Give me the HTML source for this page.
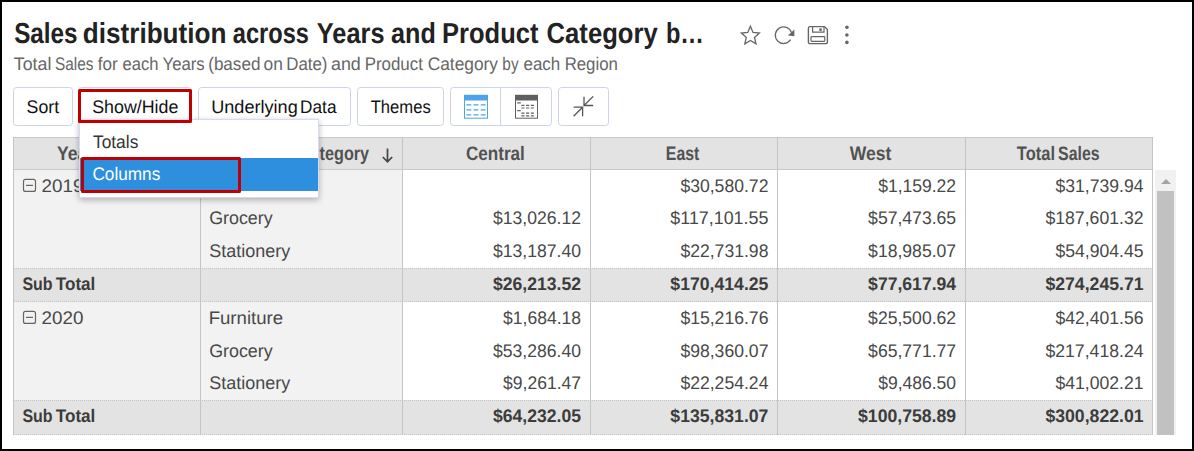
<!DOCTYPE html>
<html lang="en"><head><meta charset="utf-8"><title>Sales distribution across Years and Product Category by Region</title><style>
html,body{margin:0;padding:0;}
body{width:1194px;height:451px;position:relative;overflow:hidden;background:#fff;font-family:"Liberation Sans", sans-serif;}
.t{position:absolute;left:0;white-space:nowrap;text-rendering:geometricPrecision;transform-origin:0 50%;}
.abs{position:absolute;box-sizing:border-box;}
.btn{position:absolute;box-sizing:border-box;border:1px solid #ccd3ea;border-radius:3.5px;background:#fff;top:87px;height:39px;}
.hl{position:absolute;box-sizing:border-box;border:3px solid #c00000;border-radius:1.5px;}
.frame{position:absolute;box-sizing:border-box;left:0;top:0;width:1194px;height:451px;border:2px solid #000;pointer-events:none;}
</style></head><body>
<h1 class="title" style="margin:0;font-size:inherit;font-weight:inherit;">
<span class="t" style="top:17px;font-size:28.9px;line-height:34px;font-weight:700;color:#222;transform:translateX(14.13px) scaleX(0.8411);">Sales </span>
<span class="t" style="top:17px;font-size:28.9px;line-height:34px;font-weight:700;color:#222;transform:translateX(82.82px) scaleX(0.9039);">distribution </span>
<span class="t" style="top:17px;font-size:28.9px;line-height:34px;font-weight:700;color:#222;transform:translateX(232.85px) scaleX(0.8175);">across </span>
<span class="t" style="top:17px;font-size:28.9px;line-height:34px;font-weight:700;color:#222;transform:translateX(316.87px) scaleX(0.8765);">Years </span>
<span class="t" style="top:17px;font-size:28.9px;line-height:34px;font-weight:700;color:#222;transform:translateX(391.08px) scaleX(0.8703);">and </span>
<span class="t" style="top:17px;font-size:28.9px;line-height:34px;font-weight:700;color:#222;transform:translateX(442.08px) scaleX(0.8822);">Product </span>
<span class="t" style="top:17px;font-size:28.9px;line-height:34px;font-weight:700;color:#222;transform:translateX(546.58px) scaleX(0.8872);">Category </span>
<span class="t" style="top:17px;font-size:28.9px;line-height:34px;font-weight:700;color:#222;transform:translateX(665.88px) scaleX(0.8165);">b… </span>
</h1>
<p class="subtitle" style="margin:0;">
<span class="t" style="top:53px;font-size:18.2px;line-height:22px;color:#666;transform:translateX(13.78px) scaleX(0.9773);">Total </span>
<span class="t" style="top:53px;font-size:18.2px;line-height:22px;color:#666;transform:translateX(55.01px) scaleX(0.8451);">Sales </span>
<span class="t" style="top:53px;font-size:18.2px;line-height:22px;color:#666;transform:translateX(97.67px) scaleX(0.9393);">for </span>
<span class="t" style="top:53px;font-size:18.2px;line-height:22px;color:#666;transform:translateX(122.54px) scaleX(0.9120);">each </span>
<span class="t" style="top:53px;font-size:18.2px;line-height:22px;color:#666;transform:translateX(162.49px) scaleX(0.9220);">Years </span>
<span class="t" style="top:53px;font-size:18.2px;line-height:22px;color:#666;transform:translateX(208.20px) scaleX(0.9381);">(based </span>
<span class="t" style="top:53px;font-size:18.2px;line-height:22px;color:#666;transform:translateX(263.55px) scaleX(0.9544);">on </span>
<span class="t" style="top:53px;font-size:18.2px;line-height:22px;color:#666;transform:translateX(286.19px) scaleX(0.9283);">Date) </span>
<span class="t" style="top:53px;font-size:18.2px;line-height:22px;color:#666;transform:translateX(330.95px) scaleX(0.9837);">and </span>
<span class="t" style="top:53px;font-size:18.2px;line-height:22px;color:#666;transform:translateX(364.64px) scaleX(0.9298);">Product </span>
<span class="t" style="top:53px;font-size:18.2px;line-height:22px;color:#666;transform:translateX(427.68px) scaleX(0.9532);">Category </span>
<span class="t" style="top:53px;font-size:18.2px;line-height:22px;color:#666;transform:translateX(502.34px) scaleX(0.8444);">by </span>
<span class="t" style="top:53px;font-size:18.2px;line-height:22px;color:#666;transform:translateX(523.51px) scaleX(0.9320);">each </span>
<span class="t" style="top:53px;font-size:18.2px;line-height:22px;color:#666;transform:translateX(564.65px) scaleX(0.9235);">Region </span>
</p>
<div class="toolbar">
<div class="btn" style="left:13px;width:60px;"></div>
<div class="btn" style="left:78px;width:114px;"></div>
<div class="btn" style="left:198px;width:153px;"></div>
<div class="btn" style="left:357px;width:87px;"></div>
<div class="btn" style="left:450px;width:102px;"></div>
<div class="abs" style="left:500px;top:87px;width:1px;height:39px;background:#ccd3ea;"></div>
<div class="btn" style="left:558px;width:51px;"></div>
<span class="t" style="top:96px;font-size:18.2px;line-height:22px;color:#111;transform:translateX(26.62px) scaleX(0.9745);">Sort </span>
<span class="t" style="top:96px;font-size:18.2px;line-height:22px;color:#111;transform:translateX(92.14px) scaleX(0.9809);">Show/Hide </span>
<span class="t" style="top:96px;font-size:18.2px;line-height:22px;color:#111;transform:translateX(211.22px) scaleX(0.9953);">Underlying </span>
<span class="t" style="top:96px;font-size:18.2px;line-height:22px;color:#111;transform:translateX(300.12px) scaleX(0.9462);">Data </span>
<span class="t" style="top:96px;font-size:18.2px;line-height:22px;color:#111;transform:translateX(370.71px) scaleX(0.9130);">Themes </span>
<svg class="abs" style="left:0;top:0;" width="1194" height="451" viewBox="0 0 1194 451" fill="none">
<!-- star -->
<path d="M750.4 26.2 L753 32.4 L759.4 33 L754.5 37.4 L756 43.8 L750.4 40.4 L744.8 43.8 L746.3 37.4 L741.4 33 L747.8 32.4 Z" stroke="#666" stroke-width="1.3" stroke-linejoin="miter" fill="none"/>
<!-- reload -->
<path d="M791.5 32.6 A8.3 8.3 0 1 0 790.6 39.7" stroke="#666" stroke-width="1.25" fill="none"/>
<path d="M794.4 29.4 L794.4 36.2 L787.9 35.5 Z" fill="#666"/>
<!-- save -->
<path d="M810 26.6 H824.5 L827.4 29.5 V42 A1.6 1.6 0 0 1 825.8 43.6 H810 A1.6 1.6 0 0 1 808.4 42 V28.2 A1.6 1.6 0 0 1 810 26.6 Z" stroke="#666" stroke-width="1.4" fill="none"/>
<path d="M812.6 26.6 V32.2 H824 V26.6" stroke="#666" stroke-width="1.2" fill="none"/>
<rect x="819.3" y="28.4" width="2.5" height="2.5" fill="#666"/>
<rect x="811" y="36.6" width="13.8" height="4.7" rx="0.8" stroke="#666" stroke-width="1.2" fill="none"/>
<!-- dots -->
<circle cx="846.9" cy="27.3" r="1.8" fill="#666"/><circle cx="846.9" cy="35" r="1.8" fill="#666"/><circle cx="846.9" cy="42.4" r="1.8" fill="#666"/>
<g transform="translate(0,0.4)">
<!-- blue table icon -->
<rect x="464" y="94.5" width="24" height="5.6" fill="#4da3e9"/>
<rect x="464.5" y="95" width="23" height="22.8" stroke="#4da3e9" stroke-width="1" fill="none"/>
<g stroke="#4da3e9" stroke-width="1.2">
<path d="M466.4 104.4h4.9M473.5 104.4h4.9M480.7 104.4h4.9"/>
<path d="M466.4 109.4h4.9M473.5 109.4h4.9M480.7 109.4h4.9"/>
<path d="M466.4 114.4h4.9M473.5 114.4h4.9M480.7 114.4h4.9"/>
</g>
<!-- dark pivot icon -->
<rect x="515" y="94.5" width="23" height="5.6" fill="#606060"/>
<rect x="515.5" y="95" width="22" height="22.8" stroke="#606060" stroke-width="1" fill="none"/>
<g stroke="#606060" stroke-width="1.2">
<path d="M517.2 102.4h3.6M517.2 110.3h3.6"/>
<path d="M521.4 105h3.1M526 105h3.2M530.8 105h3.1"/>
<path d="M521.4 107.6h3.1M526 107.6h3.2M530.8 107.6h3.1"/>
<path d="M521.4 112.8h3.1M526 112.8h3.2M530.8 112.8h3.1"/>
<path d="M521.4 115.4h3.1M526 115.4h3.2M530.8 115.4h3.1"/>
</g>
</g>
<!-- collapse icon -->
<g stroke="#555" stroke-width="1.3" fill="none">
<path d="M593.2 96.4 L584 105.5 M584 96.8 V105.5 H593.2"/>
<path d="M573.6 116.3 L582.6 107.2 M573.6 107.2 H582.6 V116.3"/>
</g>
</svg>

</div>
<div class="pivot">
<div class="abs" style="left:13px;top:169px;width:390px;height:266px;background:#f2f2f2;"></div>
<div class="abs" style="left:13px;top:137px;width:1140px;height:33px;background:#e3e3e3;border-top:1px solid #c9c9c9;border-bottom:1px solid #c9c9c9;"></div>
<div class="abs" style="left:13px;top:268px;width:1140px;height:34px;background:#e3e3e3;border-top:1px dotted #c4c4c4;border-bottom:1px dotted #c4c4c4;"></div>
<div class="abs" style="left:13px;top:400px;width:1140px;height:35px;background:#e3e3e3;border-top:1px dotted #c4c4c4;border-bottom:1px dotted #c4c4c4;"></div>
<div class="abs" style="left:13px;top:137px;width:1px;height:298px;background:#c4c4c4;"></div>
<div class="abs" style="left:200px;top:137px;width:1px;height:298px;background:#c4c4c4;"></div>
<div class="abs" style="left:402px;top:137px;width:1px;height:298px;background:#c4c4c4;"></div>
<div class="abs" style="left:590px;top:137px;width:1px;height:298px;background:#c4c4c4;"></div>
<div class="abs" style="left:777px;top:137px;width:1px;height:298px;background:#c4c4c4;"></div>
<div class="abs" style="left:965px;top:137px;width:1px;height:298px;background:#c4c4c4;"></div>
<div class="abs" style="left:1152px;top:137px;width:1px;height:298px;background:#c4c4c4;"></div>
<div class="abs" style="left:1155px;top:170px;width:21px;height:265px;background:#f1f1f1;"></div>
<div class="abs" style="left:1157px;top:191px;width:17px;height:244px;background:#c1c1c1;"></div>
<div class="abs" style="left:1161px;top:179px;width:0;height:0;border-left:5px solid transparent;border-right:5px solid transparent;border-bottom:5px solid #a3a3a3;"></div>
<svg class="abs" style="left:0;top:0;" width="1194" height="451" viewBox="0 0 1194 451" fill="none">
<g stroke="#666" stroke-width="1.2" fill="none">
<rect x="23.5" y="179.4" width="12" height="12" rx="2"/><path d="M26 185.4H33"/>
<rect x="23.5" y="311.4" width="12" height="12" rx="2"/><path d="M26 317.4H33"/>
</g>
<path d="M387.5 148.5V161.5M382.8 157L387.5 161.8L392.2 157" stroke="#444" stroke-width="1.7" fill="none"/>
</svg>

<div class="thead">
<span class="t" style="top:142px;font-size:19.5px;line-height:24px;font-weight:700;color:#525252;transform:translateX(56.95px) scaleX(0.9028);">Years </span>
<span class="t" style="top:142px;font-size:19.5px;line-height:24px;font-weight:700;color:#525252;transform:translateX(233.52px) scaleX(0.8314);">Product </span>
<span class="t" style="top:142px;font-size:19.5px;line-height:24px;font-weight:700;color:#525252;transform:translateX(298.39px) scaleX(0.7658);">Ca</span>
<span class="t" style="top:142px;font-size:19.5px;line-height:24px;font-weight:700;color:#525252;transform:translateX(319.57px) scaleX(0.8318);">tegory </span>
<span class="t" style="top:142px;font-size:19.5px;line-height:24px;font-weight:700;color:#525252;transform:translateX(465.94px) scaleX(0.8770);">Central </span>
<span class="t" style="top:142px;font-size:19.5px;line-height:24px;font-weight:700;color:#525252;transform:translateX(665.81px) scaleX(0.8136);">East </span>
<span class="t" style="top:142px;font-size:19.5px;line-height:24px;font-weight:700;color:#525252;transform:translateX(849.82px) scaleX(0.8983);">West </span>
<span class="t" style="top:142px;font-size:19.5px;line-height:24px;font-weight:700;color:#525252;transform:translateX(1016.81px) scaleX(0.8460);">Total </span>
<span class="t" style="top:142px;font-size:19.5px;line-height:24px;font-weight:700;color:#525252;transform:translateX(1058.12px) scaleX(0.8135);">Sales </span>
</div>
<div class="row">
<span class="t" style="top:175px;font-size:18.2px;line-height:22px;color:#484848;transform:translateX(41.60px) scaleX(1.0355);">2019 </span>
<span class="t" style="top:175px;font-size:18.2px;line-height:22px;color:#484848;transform:translateX(208.64px) scaleX(1.0234);">Furniture </span>
<span class="t" style="top:175px;font-size:18.2px;line-height:22px;color:#484848;transform:translateX(680.40px) scaleX(0.9668);">$30,580.72 </span>
<span class="t" style="top:175px;font-size:18.2px;line-height:22px;color:#484848;transform:translateX(878.15px) scaleX(0.9634);">$1,159.22 </span>
<span class="t" style="top:175px;font-size:18.2px;line-height:22px;color:#484848;transform:translateX(1055.50px) scaleX(0.9668);">$31,739.94 </span>
</div>
<div class="row">
<span class="t" style="top:207px;font-size:18.2px;line-height:22px;color:#484848;transform:translateX(209.20px) scaleX(0.9812);">Grocery </span>
<span class="t" style="top:207px;font-size:18.2px;line-height:22px;color:#484848;transform:translateX(493.00px) scaleX(0.9668);">$13,026.12 </span>
<span class="t" style="top:207px;font-size:18.2px;line-height:22px;color:#484848;transform:translateX(670.35px) scaleX(0.9826);">$117,101.55 </span>
<span class="t" style="top:207px;font-size:18.2px;line-height:22px;color:#484848;transform:translateX(868.10px) scaleX(0.9668);">$57,473.65 </span>
<span class="t" style="top:207px;font-size:18.2px;line-height:22px;color:#484848;transform:translateX(1045.45px) scaleX(0.9694);">$187,601.32 </span>
</div>
<div class="row">
<span class="t" style="top:240px;font-size:18.2px;line-height:22px;color:#484848;transform:translateX(209.16px) scaleX(0.9897);">Stationery </span>
<span class="t" style="top:240px;font-size:18.2px;line-height:22px;color:#484848;transform:translateX(493.00px) scaleX(0.9668);">$13,187.40 </span>
<span class="t" style="top:240px;font-size:18.2px;line-height:22px;color:#484848;transform:translateX(680.40px) scaleX(0.9668);">$22,731.98 </span>
<span class="t" style="top:240px;font-size:18.2px;line-height:22px;color:#484848;transform:translateX(868.10px) scaleX(0.9668);">$18,985.07 </span>
<span class="t" style="top:240px;font-size:18.2px;line-height:22px;color:#484848;transform:translateX(1055.50px) scaleX(0.9668);">$54,904.45 </span>
</div>
<div class="row">
<span class="t" style="top:273px;font-size:18.2px;line-height:22px;font-weight:700;color:#3c3c3c;transform:translateX(22.41px) scaleX(0.8784);">Sub </span>
<span class="t" style="top:273px;font-size:18.2px;line-height:22px;font-weight:700;color:#3c3c3c;transform:translateX(55.77px) scaleX(0.9408);">Total </span>
<span class="t" style="top:273px;font-size:18.2px;line-height:22px;font-weight:700;color:#3c3c3c;transform:translateX(493.00px) scaleX(0.9668);">$26,213.52 </span>
<span class="t" style="top:273px;font-size:18.2px;line-height:22px;font-weight:700;color:#3c3c3c;transform:translateX(670.35px) scaleX(0.9694);">$170,414.25 </span>
<span class="t" style="top:273px;font-size:18.2px;line-height:22px;font-weight:700;color:#3c3c3c;transform:translateX(868.10px) scaleX(0.9668);">$77,617.94 </span>
<span class="t" style="top:273px;font-size:18.2px;line-height:22px;font-weight:700;color:#3c3c3c;transform:translateX(1045.45px) scaleX(0.9694);">$274,245.71 </span>
</div>
<div class="row">
<span class="t" style="top:307px;font-size:18.2px;line-height:22px;color:#484848;transform:translateX(41.60px) scaleX(1.0349);">2020 </span>
<span class="t" style="top:307px;font-size:18.2px;line-height:22px;color:#484848;transform:translateX(208.64px) scaleX(1.0234);">Furniture </span>
<span class="t" style="top:307px;font-size:18.2px;line-height:22px;color:#484848;transform:translateX(503.05px) scaleX(0.9634);">$1,684.18 </span>
<span class="t" style="top:307px;font-size:18.2px;line-height:22px;color:#484848;transform:translateX(680.40px) scaleX(0.9668);">$15,216.76 </span>
<span class="t" style="top:307px;font-size:18.2px;line-height:22px;color:#484848;transform:translateX(868.10px) scaleX(0.9668);">$25,500.62 </span>
<span class="t" style="top:307px;font-size:18.2px;line-height:22px;color:#484848;transform:translateX(1055.50px) scaleX(0.9668);">$42,401.56 </span>
</div>
<div class="row">
<span class="t" style="top:340px;font-size:18.2px;line-height:22px;color:#484848;transform:translateX(209.20px) scaleX(0.9812);">Grocery </span>
<span class="t" style="top:340px;font-size:18.2px;line-height:22px;color:#484848;transform:translateX(493.00px) scaleX(0.9668);">$53,286.40 </span>
<span class="t" style="top:340px;font-size:18.2px;line-height:22px;color:#484848;transform:translateX(680.40px) scaleX(0.9668);">$98,360.07 </span>
<span class="t" style="top:340px;font-size:18.2px;line-height:22px;color:#484848;transform:translateX(868.10px) scaleX(0.9668);">$65,771.77 </span>
<span class="t" style="top:340px;font-size:18.2px;line-height:22px;color:#484848;transform:translateX(1045.45px) scaleX(0.9694);">$217,418.24 </span>
</div>
<div class="row">
<span class="t" style="top:372px;font-size:18.2px;line-height:22px;color:#484848;transform:translateX(209.16px) scaleX(0.9897);">Stationery </span>
<span class="t" style="top:372px;font-size:18.2px;line-height:22px;color:#484848;transform:translateX(503.05px) scaleX(0.9634);">$9,261.47 </span>
<span class="t" style="top:372px;font-size:18.2px;line-height:22px;color:#484848;transform:translateX(680.40px) scaleX(0.9668);">$22,254.24 </span>
<span class="t" style="top:372px;font-size:18.2px;line-height:22px;color:#484848;transform:translateX(878.15px) scaleX(0.9634);">$9,486.50 </span>
<span class="t" style="top:372px;font-size:18.2px;line-height:22px;color:#484848;transform:translateX(1055.50px) scaleX(0.9668);">$41,002.21 </span>
</div>
<div class="row">
<span class="t" style="top:405px;font-size:18.2px;line-height:22px;font-weight:700;color:#3c3c3c;transform:translateX(22.41px) scaleX(0.8784);">Sub </span>
<span class="t" style="top:405px;font-size:18.2px;line-height:22px;font-weight:700;color:#3c3c3c;transform:translateX(55.77px) scaleX(0.9408);">Total </span>
<span class="t" style="top:405px;font-size:18.2px;line-height:22px;font-weight:700;color:#3c3c3c;transform:translateX(493.00px) scaleX(0.9668);">$64,232.05 </span>
<span class="t" style="top:405px;font-size:18.2px;line-height:22px;font-weight:700;color:#3c3c3c;transform:translateX(670.35px) scaleX(0.9694);">$135,831.07 </span>
<span class="t" style="top:405px;font-size:18.2px;line-height:22px;font-weight:700;color:#3c3c3c;transform:translateX(858.05px) scaleX(0.9694);">$100,758.89 </span>
<span class="t" style="top:405px;font-size:18.2px;line-height:22px;font-weight:700;color:#3c3c3c;transform:translateX(1045.45px) scaleX(0.9694);">$300,822.01 </span>
</div>
</div>
<div class="menu">
<div class="abs" style="left:79px;top:119px;width:240px;height:78.6px;background:#fff;border:1px solid #d5daf0;box-shadow:0 2px 6px rgba(0,0,0,.28);"></div>
<div class="abs" style="left:80px;top:158px;width:238px;height:33px;background:#2d8fdd;"></div>
<span class="t" style="top:131px;font-size:18.2px;line-height:22px;color:#333;transform:translateX(92.96px) scaleX(0.9546);">Totals </span>
<span class="t" style="top:163px;font-size:18.2px;line-height:22px;color:#fff;transform:translateX(92.39px) scaleX(0.9462);">Columns </span>
</div>
<div class="hl" style="left:81px;top:156.5px;width:159.5px;height:36.7px;"></div>
<div class="hl" style="left:77.7px;top:88.6px;width:114px;height:34.8px;"></div>
<div class="frame"></div>
</body></html>
